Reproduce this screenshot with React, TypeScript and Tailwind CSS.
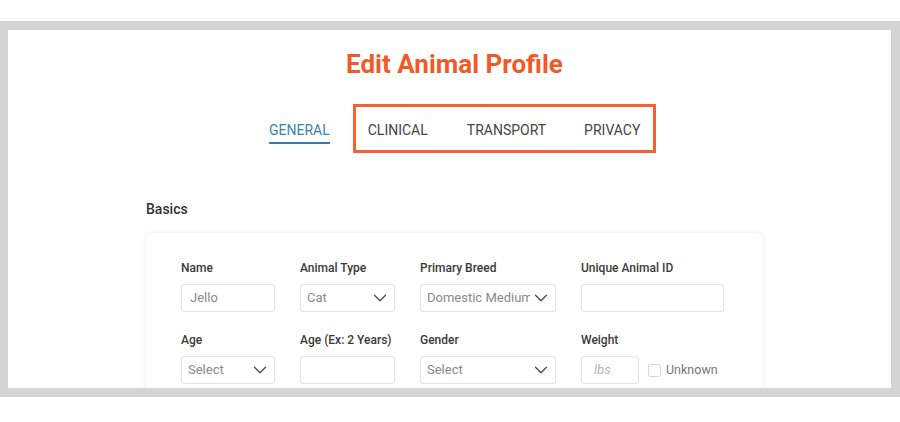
import { ChevronDown } from "lucide-react";

const font = { fontFamily: "Roboto, 'Liberation Sans', sans-serif" };

function Label({ children }: { children: React.ReactNode }) {
  return <div className="text-[12px] font-medium text-[#3a3a3a] leading-4 mb-[8px] whitespace-nowrap">{children}</div>;
}

function TextBox({ value, italic }: { value?: string; italic?: boolean }) {
  return (
    <div
      className={`w-full h-[28px] border border-[#e3e3e3] rounded-[3px] flex items-center px-[8px] text-[13px] ${
        italic ? "italic text-[#b5b5b5] pl-[12px]" : "text-[#8a8a8a]"
      }`}
    >
      {value}
    </div>
  );
}

function SelectBox({ value }: { value: string }) {
  return (
    <div className="w-full h-[28px] border border-[#e3e3e3] rounded-[3px] flex items-center justify-between pl-[6px] pr-[7px] text-[13px] text-[#8a8a8a]">
      <span className="whitespace-nowrap overflow-hidden">{value}</span>
      <ChevronDown size={22} strokeWidth={1.3} className="text-[#444] shrink-0 -mr-[4px]" />
    </div>
  );
}

export default function App() {
  return (
    <div className="w-[900px] h-[422px] bg-white overflow-hidden" style={font}>
      <div className="mt-[21px] h-[376px] border-t-[9px] border-b-[9px] border-l-[8px] border-r-[9px] border-[#d4d4d4] bg-white overflow-hidden">
        {/* Title */}
        <h1 className="text-center text-[26px] font-bold text-[#f05a28] leading-none mt-[21px] ml-[10px]">
          Edit Animal Profile
        </h1>

        {/* Tabs */}
        <div className="flex items-start mt-[27px] ml-[261px]">
          <div className="flex flex-col mt-[18px]">
            <span className="text-[14px] text-[#3b7fb6] leading-4">GENERAL</span>
            <div className="h-[2px] bg-[#2f7cb8] mt-[4px]" />
          </div>
          <div className="ml-[23px] w-[303px] h-[49px] border-[3px] border-[#f3622f] flex items-center text-[14px] text-[#444] leading-4 pl-[12px] pt-[2px]">
            <span>CLINICAL</span>
            <span className="ml-[39px]">TRANSPORT</span>
            <span className="ml-[38px]">PRIVACY</span>
          </div>
        </div>

        {/* Basics */}
        <div className="ml-[138px] mt-[48px] text-[14px] font-medium text-[#333] leading-4">Basics</div>

        <div className="ml-[138px] mt-[16px] w-[617px] h-[200px] bg-white rounded-[8px] shadow-[0_0_6px_rgba(0,0,0,0.08)] pt-[27px] pl-[35px]">
          <div className="grid grid-cols-[94px_95px_136px_143px] gap-x-[25px] gap-y-[20px]">
            <div>
              <Label>Name</Label>
              <TextBox value="Jello" />
            </div>
            <div>
              <Label>Animal Type</Label>
              <SelectBox value="Cat" />
            </div>
            <div>
              <Label>Primary Breed</Label>
              <SelectBox value="Domestic Medium Hair" />
            </div>
            <div>
              <Label>Unique Animal ID</Label>
              <TextBox />
            </div>

            <div>
              <Label>Age</Label>
              <SelectBox value="Select" />
            </div>
            <div>
              <Label>Age (Ex: 2 Years)</Label>
              <TextBox />
            </div>
            <div>
              <Label>Gender</Label>
              <SelectBox value="Select" />
            </div>
            <div>
              <Label>Weight</Label>
              <div className="flex items-center">
                <div className="w-[58px] shrink-0">
                  <TextBox value="lbs" italic />
                </div>
                <div className="ml-[9px] w-[13px] h-[13px] border border-[#d8d8d8] rounded-[2px] shrink-0" />
                <span className="ml-[5px] text-[12.5px] text-[#777] whitespace-nowrap">Unknown</span>
              </div>
            </div>
          </div>
        </div>
      </div>
    </div>
  );
}
